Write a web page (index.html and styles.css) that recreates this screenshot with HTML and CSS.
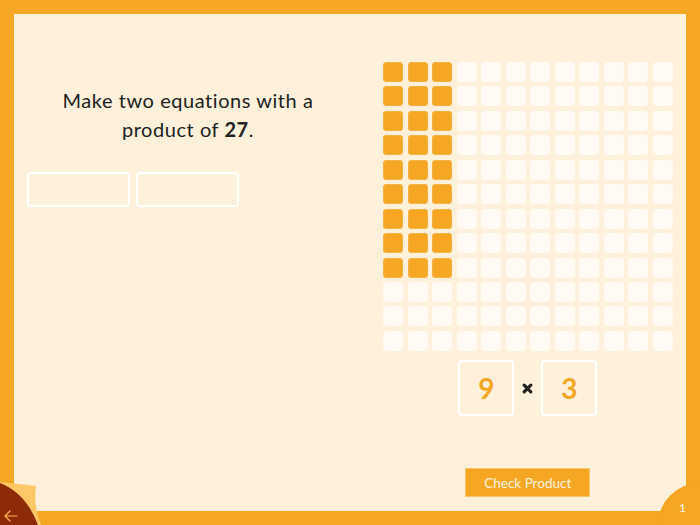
FILE: index.html
```html
<!DOCTYPE html>
<html>
<head>
<meta charset="utf-8">
<link rel="stylesheet" href="styles.css">
</head>
<body>
<div class="frame">
  <div class="panel">
    <div class="left">
      <p class="prompt">Make two equations with a<br>product of <b>27</b>.</p>
      <div class="answers">
        <div class="answer"></div>
        <div class="answer"></div>
      </div>
    </div>
    <div class="right">
      <div class="grid" id="grid"></div>
      <div class="equation">
        <div class="factor">9</div>
        <svg class="times" width="11" height="11" viewBox="0 0 11 11"><path d="M2.2 2.2 L8.8 8.8 M8.8 2.2 L2.2 8.8" stroke="#222" stroke-width="3.2" stroke-linecap="round"/></svg>
        <div class="factor">3</div>
      </div>
      <button class="check">Check Product</button>
    </div>
  </div>
</div>
<svg class="curl" width="46" height="46" viewBox="0 0 46 46">
  <path d="M0 3 L36 7 Q33 26 41 46 L0 46 Z" fill="#FFC766"/>
  <path d="M0 4 Q26 14 38 46 L0 46 Z" fill="#8E2B06"/>
  <path d="M17 37 L5 37 M10 32 L5 37 L10 42" stroke="#F7B55A" stroke-width="1.2" fill="none" stroke-linecap="round" stroke-linejoin="round"/>
</svg>
<div class="pagenum"><span>1</span></div>
<script>
  var g = document.getElementById('grid');
  for (var r = 0; r < 12; r++) {
    for (var c = 0; c < 12; c++) {
      var d = document.createElement('div');
      d.className = 'cell' + (r < 9 && c < 3 ? ' on' : '');
      g.appendChild(d);
    }
  }
</script>
</body>
</html>
```
FILE: styles.css
```css
html, body {
  margin: 0;
  padding: 0;
}
body {
  width: 700px;
  height: 525px;
  background: #F5A623;
  overflow: hidden;
  position: relative;
  font-family: "Lato", "Open Sans", sans-serif;
}
.frame {
  padding: 14px;
}
.panel {
  width: 672px;
  height: 497px;
  background: #FEF0DB;
  display: flex;
}
.left {
  width: 369px;
  display: flex;
  flex-direction: column;
  align-items: flex-start;
}
.prompt {
  margin: 72px 0 0 0;
  width: 348px;
  text-align: center;
  font-size: 20px;
  line-height: 28.5px;
  letter-spacing: 0.55px;
  color: #222;
}
.prompt b {
  font-weight: 700;
}
.answers {
  display: flex;
  gap: 6px;
  margin: 29px 0 0 13px;
}
.answer {
  width: 99px;
  height: 31px;
  border: 2px solid #fff;
  border-radius: 4px;
}
.right {
  width: 289.5px;
  padding-top: 48px;
  display: flex;
  flex-direction: column;
  align-items: center;
}
.grid {
  display: grid;
  grid-template-columns: repeat(12, 20px);
  grid-auto-rows: 20px;
  gap: 4.45px 4.5px;
}
.cell {
  background: #FFFBF4;
  border-radius: 4px;
}
.cell.on {
  background: #F5A623;
  box-shadow: inset 0 0 0 1px #F7B245;
}
.equation {
  margin-top: 9.5px;
  display: flex;
  align-items: center;
  gap: 8px;
}
.factor {
  width: 52px;
  height: 52px;
  border: 2px solid #fff;
  border-radius: 4px;
  display: flex;
  align-items: center;
  justify-content: center;
  color: #F5A623;
  font-size: 28px;
  font-weight: 700;
}
.times {
  display: block;
}
.check {
  margin-top: 52px;
  width: 125px;
  height: 29px;
  background: #F5A623;
  border: 1px solid #FAC56A;
  color: #FFF4E0;
  font-family: "Lato", "Open Sans", sans-serif;
  font-size: 13.5px;
  font-weight: 400;
  padding: 0;
}
.curl {
  position: absolute;
  left: 0;
  bottom: 0;
  display: block;
}
.pagenum {
  position: absolute;
  left: 658px;
  top: 483px;
  width: 42px;
  height: 42px;
  border-top-left-radius: 42px;
  background: #F5A623;
}
.pagenum span {
  position: absolute;
  left: 21px;
  top: 17px;
  color: #fff;
  font-size: 12px;
}
```
